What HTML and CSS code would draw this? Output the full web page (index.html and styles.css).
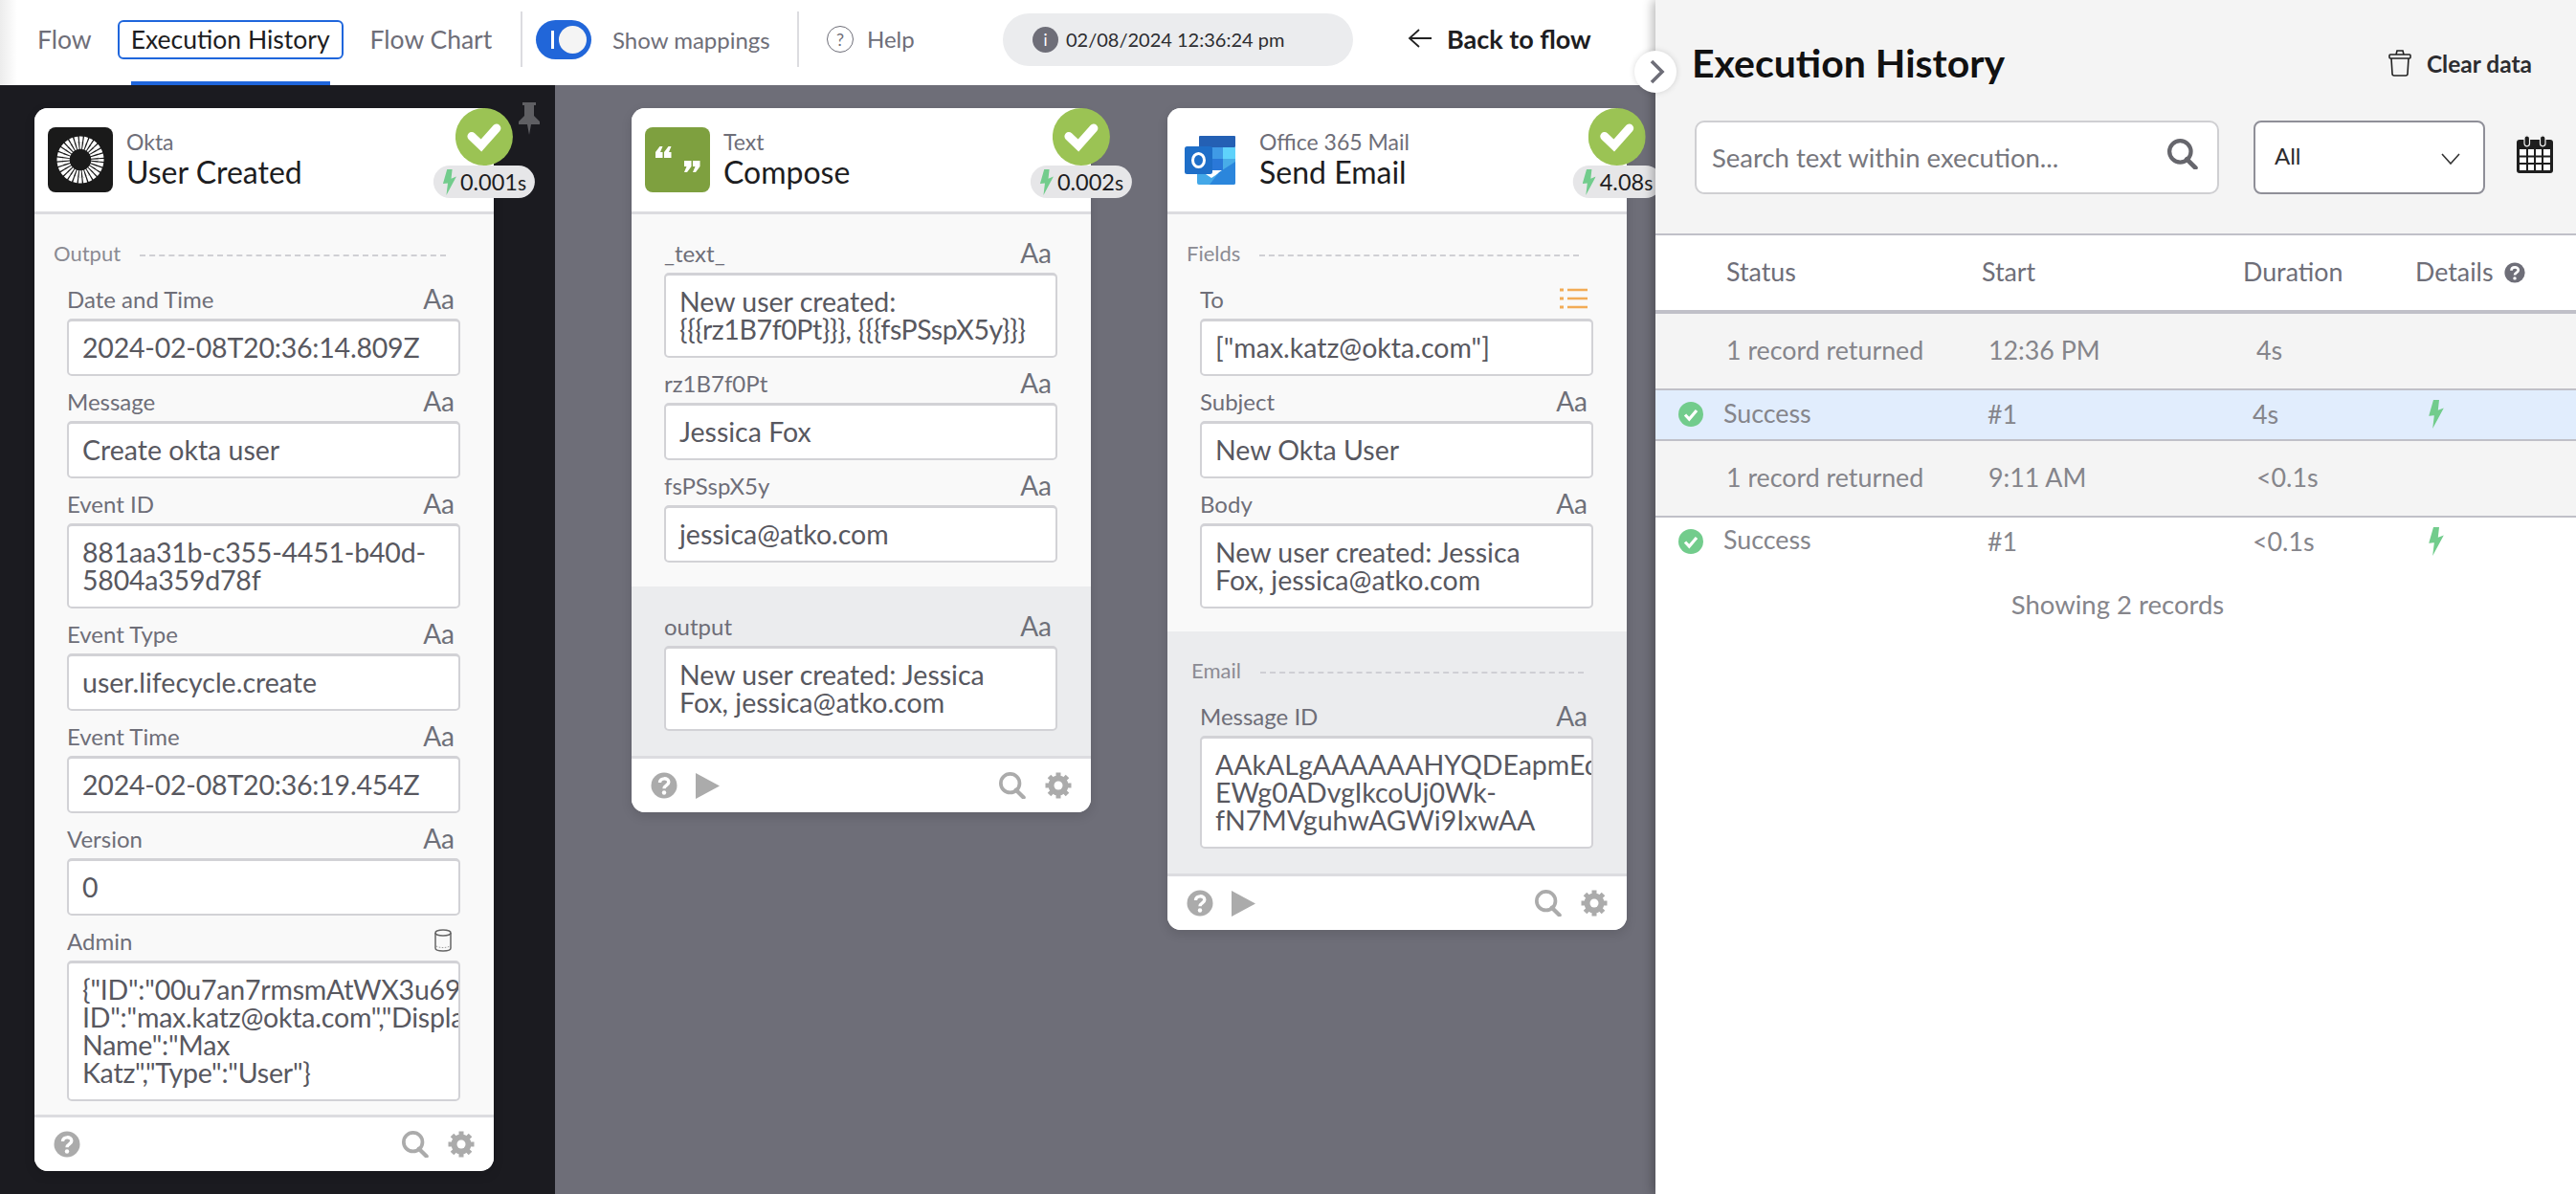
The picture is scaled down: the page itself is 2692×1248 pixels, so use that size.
FILE: index.html
```html
<!DOCTYPE html>
<html lang="en">
<head>
<meta charset="utf-8">
<title>Execution History</title>
<link rel="stylesheet" href="styles.css">
</head>
<body>
<svg class="defs" width="0" height="0" aria-hidden="true">
  <defs>
    <symbol id="bolt" viewBox="0 0 13 25"><path d="M4 0 H9 L8 9 L13 7 L3.300 25 L4.700 13.500 L0 14 Z" fill="#72cc8c"/></symbol>
    <symbol id="check" viewBox="0 0 60 60"><circle cx="30" cy="30" r="30" fill="#9bc354"/><path d="M17 29.500 L27 39 L43 21" fill="none" stroke="#fff" stroke-width="9" stroke-linecap="round"/></symbol>
    <symbol id="search" viewBox="0 0 30 30"><circle cx="12.500" cy="12.500" r="10.500" fill="none" stroke="currentColor" stroke-width="4"/><path d="M19 20 L27.500 28.500" fill="none" stroke="currentColor" stroke-width="4.500" stroke-linecap="round"/></symbol>
    <symbol id="qmark" viewBox="0 0 28 28"><circle cx="14" cy="14" r="13.500" fill="currentColor"/><path d="M9.500 11 C9.500 5.500 18.800 5.500 18.800 10.600 C18.800 14 14 13.800 14 17.300" fill="none" stroke="#fff" stroke-width="3.400"/><circle cx="14" cy="21.500" r="2.200" fill="#fff"/></symbol>
    <symbol id="gear" viewBox="0 0 28 28"><circle cx="14" cy="14" r="7.500" fill="none" stroke="currentColor" stroke-width="6"/><path d="M14 0.500 V27.500 M0.500 14 H27.500 M4.500 4.500 L23.500 23.500 M23.500 4.500 L4.500 23.500" stroke="currentColor" stroke-width="5"/><circle cx="14" cy="14" r="4.500" fill="#fff"/></symbol>
    <symbol id="okcheck" viewBox="0 0 26 26"><circle cx="13" cy="13" r="13" fill="#72cc8c"/><path d="M7 13.500 L11.300 18 L19 9" fill="none" stroke="#fff" stroke-width="3.200"/></symbol>
  </defs>
</svg>
<div class="app">
  <main class="main">
    <header class="topbar">
      <nav class="tabs">
        <a class="tab">Flow</a>
        <a class="tab tab-active"><span class="tab-focus">Execution History</span></a>
        <a class="tab">Flow Chart</a>
      </nav>
      <div class="mapping">
        <span class="toggle"><i class="toggle-bar"></i><i class="toggle-knob"></i></span>
        <span class="mapping-label">Show mappings</span>
      </div>
      <div class="help">
        <span class="help-circle">?</span>
        <span>Help</span>
      </div>
      <div class="date-pill"><span class="info">i</span><span>02/08/2024 12:36:24 pm</span></div>
      <a class="back"><svg class="back-arrow" viewBox="0 0 26 24"><path d="M12 3 L2 12 L12 21 M2 12 H25" fill="none" stroke="#222" stroke-width="1.800"/></svg>Back to flow</a>
    </header>

    <div class="canvas">
      <section class="source">
        <svg class="pin" viewBox="0 0 24 34"><path d="M5 0 H19 V3 H17 V14 L23 20 V23 H14 L12 34 L10 23 H1 V20 L7 14 V3 H5 Z" fill="#5f5f63"/></svg>
        <article class="card">
          <div class="status"><svg class="check"><use href="#check"/></svg><span class="timing"><svg class="bolt"><use href="#bolt"/></svg>0.001<small>s</small></span></div>
          <header class="card-head">
            <span class="logo logo-okta">
              <svg viewBox="0 0 68 68" width="68" height="68">
                <circle cx="34" cy="34" r="15" fill="none" stroke="#fff" stroke-width="7.500" stroke-dasharray="2.200 1.166" stroke-dashoffset="1.100"/>
                <circle cx="34" cy="34" r="21.500" fill="none" stroke="#fff" stroke-width="6" stroke-dasharray="3.600 1.225" stroke-dashoffset="1.800"/>
              </svg>
            </span>
            <div class="titles"><span class="app-name">Okta</span><span class="card-title">User Created</span></div>
          </header>
          <div class="card-body">
            <div class="group-label"><span>Output</span><i class="dash"></i></div>
            <div class="field"><div class="field-head"><span>Date and Time</span><b class="aa">Aa</b></div><div class="value value-tight">2024-02-08T20:36:14.809Z</div></div>
            <div class="field"><div class="field-head"><span>Message</span><b class="aa">Aa</b></div><div class="value">Create okta user</div></div>
            <div class="field"><div class="field-head"><span>Event ID</span><b class="aa">Aa</b></div><div class="value value-tight">881aa31b-c355-4451-b40d-<br>5804a359d78f</div></div>
            <div class="field"><div class="field-head"><span>Event Type</span><b class="aa">Aa</b></div><div class="value">user.lifecycle.create</div></div>
            <div class="field"><div class="field-head"><span>Event Time</span><b class="aa">Aa</b></div><div class="value value-tight">2024-02-08T20:36:19.454Z</div></div>
            <div class="field"><div class="field-head"><span>Version</span><b class="aa">Aa</b></div><div class="value">0</div></div>
            <div class="field"><div class="field-head"><span>Admin</span><svg class="cyl" viewBox="0 0 18 24"><ellipse cx="9" cy="4" rx="8" ry="3" fill="none" stroke="#666" stroke-width="1.500"/><path d="M1 4 V20 C1 24 17 24 17 20 V4" fill="none" stroke="#666" stroke-width="1.500"/><path d="M2 18 C5 20 13 20 16 18" fill="none" stroke="#999" stroke-dasharray="1.500 1.500"/></svg></div><div class="value value-tight">{"ID":"00u7an7rmsmAtWX3u697",<br>ID":"max.katz@okta.com","Display<br>Name":"Max<br>Katz","Type":"User"}</div></div>
          </div>
          <footer class="card-foot">
            <svg class="foot-icon"><use href="#qmark"/></svg>
            <span class="foot-gap"></span>
            <svg class="foot-icon foot-search"><use href="#search"/></svg>
            <svg class="foot-icon"><use href="#gear"/></svg>
          </footer>
        </article>
      </section>

      <section class="flow">
        <article class="card">
          <div class="status"><svg class="check"><use href="#check"/></svg><span class="timing"><svg class="bolt"><use href="#bolt"/></svg>0.002<small>s</small></span></div>
          <header class="card-head">
            <span class="logo logo-text">
              <svg viewBox="0 0 68 68" width="68" height="68"><path d="M11 32 V26 L15.500 20 H18.500 L16 26 H18.500 V32 Z M20 32 V26 L24.500 20 H27.500 L25 26 H27.500 V32 Z" fill="#fff"/><path d="M41 35 H48.500 V41 L44 47 H41 L43.500 41 H41 Z M50 35 H57.500 V41 L53 47 H50 L52.500 41 H50 Z" fill="#fff"/></svg>
            </span>
            <div class="titles"><span class="app-name">Text</span><span class="card-title">Compose</span></div>
          </header>
          <div class="card-body card-body-plain">
            <div class="field"><div class="field-head"><span>_text_</span><b class="aa">Aa</b></div><div class="value">New user created:<br><span class="mustache">{{{rz1B7f0Pt}}}, {{{fsPSspX5y}}}</span></div></div>
            <div class="field"><div class="field-head"><span>rz1B7f0Pt</span><b class="aa">Aa</b></div><div class="value">Jessica Fox</div></div>
            <div class="field"><div class="field-head"><span>fsPSspX5y</span><b class="aa">Aa</b></div><div class="value">jessica@atko.com</div></div>
          </div>
          <div class="card-output card-output-plain">
            <div class="field"><div class="field-head"><span>output</span><b class="aa">Aa</b></div><div class="value">New user created: Jessica<br>Fox, jessica@atko.com</div></div>
          </div>
          <footer class="card-foot">
            <svg class="foot-icon"><use href="#qmark"/></svg>
            <svg class="play" viewBox="0 0 25 27"><path d="M0 0 L25 13.500 L0 27 Z" fill="#ababab"/></svg>
            <span class="foot-gap"></span>
            <svg class="foot-icon foot-search"><use href="#search"/></svg>
            <svg class="foot-icon"><use href="#gear"/></svg>
          </footer>
        </article>

        <article class="card">
          <div class="status"><svg class="check"><use href="#check"/></svg><span class="timing"><svg class="bolt"><use href="#bolt"/></svg>4.08<small>s</small></span></div>
          <header class="card-head">
            <span class="logo logo-outlook">
              <svg viewBox="0 0 54 51" width="54" height="51">
                <rect x="15" y="0" width="38" height="12" rx="1" fill="#2460b4"/>
                <rect x="15" y="12" width="13" height="12" fill="#2a72d0"/><rect x="28" y="12" width="12" height="12" fill="#3f9ae6"/><rect x="40" y="12" width="13" height="12" fill="#5fd2fb"/>
                <rect x="15" y="24" width="13" height="12" fill="#1f5bb0"/><rect x="28" y="24" width="12" height="12" fill="#2a78d8"/><rect x="40" y="24" width="13" height="12" fill="#48ace8"/>
                <path d="M13 34 L28 44 L53 27 V49 Q53 51 51 51 H15 Q13 51 13 49 Z" fill="#44a8e8"/>
                <path d="M53 27 V49 Q53 51 51 51 H26 L36 38 Z" fill="#2b86dc"/>
                <rect x="0" y="11" width="29" height="29" rx="2.500" fill="#1e6ec8"/>
                <ellipse cx="14.500" cy="25.500" rx="6" ry="7" fill="none" stroke="#fff" stroke-width="3"/>
              </svg>
            </span>
            <div class="titles"><span class="app-name">Office 365 Mail</span><span class="card-title">Send Email</span></div>
          </header>
          <div class="card-body card-body-fields">
            <div class="group-label"><span>Fields</span><i class="dash"></i></div>
            <div class="field"><div class="field-head"><span>To</span><svg class="list" viewBox="0 0 29 22"><path d="M8 2 H29 M8 11 H29 M8 20 H29" stroke="#f2ac56" stroke-width="2.600"/><path d="M0 2 H4 M0 11 H4 M0 20 H4" stroke="#f2ac56" stroke-width="3"/></svg></div><div class="value">["max.katz@okta.com"]</div></div>
            <div class="field"><div class="field-head"><span>Subject</span><b class="aa">Aa</b></div><div class="value">New Okta User</div></div>
            <div class="field"><div class="field-head"><span>Body</span><b class="aa">Aa</b></div><div class="value">New user created: Jessica<br>Fox, jessica@atko.com</div></div>
          </div>
          <div class="card-output">
            <div class="group-label group-label-inset"><span>Email</span><i class="dash"></i></div>
            <div class="field"><div class="field-head"><span>Message ID</span><b class="aa">Aa</b></div><div class="value">AAkALgAAAAAAHYQDEapmEdm<br>EWg0ADvgIkcoUj0Wk-<br>fN7MVguhwAGWi9IxwAA</div></div>
          </div>
          <footer class="card-foot">
            <svg class="foot-icon"><use href="#qmark"/></svg>
            <svg class="play" viewBox="0 0 25 27"><path d="M0 0 L25 13.500 L0 27 Z" fill="#ababab"/></svg>
            <span class="foot-gap"></span>
            <svg class="foot-icon foot-search"><use href="#search"/></svg>
            <svg class="foot-icon"><use href="#gear"/></svg>
          </footer>
        </article>
      </section>
    </div>
  </main>

  <aside class="panel">
    <button class="collapse"><svg viewBox="0 0 16 26" width="16" height="26"><path d="M2 2 L13 13 L2 24" fill="none" stroke="#6e6e78" stroke-width="3.600"/></svg></button>
    <div class="panel-top">
      <div class="panel-title-row">
        <h1 class="panel-title">Execution History</h1>
        <a class="clear"><svg class="trash" viewBox="0 0 24 28"><path d="M8 5 L9 1 H15 L16 5 M2 5 H22 Q23 5 23 6 V8 Q23 9 22 9 H2 Q1 9 1 8 V6 Q1 5 2 5 Z M3 9 L4 25 Q4 27 6 27 H18 Q20 27 20 25 L21 9" fill="none" stroke="#222" stroke-width="1.600"/></svg>Clear data</a>
      </div>
      <div class="filters">
        <div class="search-box"><span>Search text within execution...</span><svg class="search-icon"><use href="#search"/></svg></div>
        <div class="select"><span>All</span><svg class="select-chevron" viewBox="0 0 20 12"><path d="M1 1 L10 11 L19 1" fill="none" stroke="#333" stroke-width="1.600"/></svg></div>
        <svg class="calendar" viewBox="0 0 38 40"><path d="M3 5 H35 Q38 5 38 8 V37 Q38 40 35 40 H3 Q0 40 0 37 V8 Q0 5 3 5 Z" fill="#1e1e1e"/><rect x="8" y="0.800" width="5.500" height="11" rx="2.700" fill="#1e1e1e" stroke="#f4f4f4" stroke-width="1.200"/><rect x="24.500" y="0.800" width="5.500" height="11" rx="2.700" fill="#1e1e1e" stroke="#f4f4f4" stroke-width="1.200"/><path d="M3 15 H35 V37 H3 Z" fill="#fff"/><path d="M11 15 V37 M19 15 V37 M27 15 V37 M3 22.500 H35 M3 30 H35" stroke="#1e1e1e" stroke-width="2"/></svg>
      </div>
    </div>
    <div class="table">
      <div class="row row-head">
        <span class="c1">Status</span><span class="c2">Start</span><span class="c3">Duration</span>
        <span class="c4">Details <svg class="details-help"><use href="#qmark"/></svg></span>
      </div>
      <div class="row row-group">
        <span class="c1">1 record returned</span><span class="c2">12:36 PM</span><span class="c3">4s</span><span></span>
      </div>
      <div class="row row-item row-selected">
        <span class="c1 status-cell"><svg class="ok"><use href="#okcheck"/></svg><span class="status-text">Success</span></span><span class="c2">#1</span><span class="c3">4s</span><span class="c4"><svg class="row-bolt"><use href="#bolt"/></svg></span>
      </div>
      <div class="row row-group">
        <span class="c1">1 record returned</span><span class="c2">9:11 AM</span><span class="c3">&lt;0.1s</span><span></span>
      </div>
      <div class="row row-item">
        <span class="c1 status-cell"><svg class="ok"><use href="#okcheck"/></svg><span class="status-text">Success</span></span><span class="c2">#1</span><span class="c3">&lt;0.1s</span><span class="c4"><svg class="row-bolt"><use href="#bolt"/></svg></span>
      </div>
    </div>
    <p class="records">Showing 2 records</p>
  </aside>
</div>
</body>
</html>
```

FILE: styles.css
```css
* { box-sizing: border-box; }
html, body { margin: 0; height: 100%; }
body { font-family: "Lato", "Liberation Sans", sans-serif; color: #333; overflow: hidden; background: #fff; }
.defs { position: absolute; }

.app { display: flex; height: 1248px; width: 2692px; overflow: hidden; }
.main { width: 1730px; flex: none; display: flex; flex-direction: column; }

/* top bar */
.topbar { height: 89px; flex: none; display: flex; align-items: center; background: linear-gradient(90deg, #ececec 0, #fff 18px); position: relative; }
.tabs { display: flex; align-items: stretch; height: 89px; padding-left: 39px; width: 546px; flex: none; position: relative; }
.tabs::after { content: ""; position: absolute; right: 0; top: 12px; height: 58px; width: 2px; background: #dcdce0; }
.tab { font-size: 26.500px; color: #6e6e78; display: flex; align-items: flex-start; padding-top: 21px; line-height: 41px; white-space: nowrap; }
.tab:first-child { margin-right: 41px; }
.tab-active { border-bottom: 4px solid #1f66dc; margin-right: 42px; color: #1d1d21; height: 89px; }
.tab-focus { display: block; margin: 0 -14px; padding: 0 12px; border: 2px solid #1f66dc; border-radius: 6px; line-height: 37px; height: 41px; }
.mapping { display: flex; align-items: center; width: 289px; flex: none; padding-left: 14px; height: 58px; position: relative; margin-top: -7px; }
.mapping::after { content: ""; position: absolute; right: 0; top: 0; height: 58px; width: 2px; background: #dcdce0; }
.toggle { width: 58px; height: 41px; border-radius: 21px; background: #2166d9; position: relative; flex: none; }
.toggle-bar { position: absolute; left: 16px; top: 11px; width: 3px; height: 19px; background: #fff; }
.toggle-knob { position: absolute; right: 5px; top: 6px; width: 29px; height: 29px; border-radius: 50%; background: #f4f4f4; }
.mapping-label { font-size: 24px; color: #6e6e78; margin-left: 22px; white-space: nowrap; }
.help { display: flex; align-items: center; gap: 14px; font-size: 24px; color: #6e6e78; margin-left: 29px; width: 184px; flex: none; margin-top: -8px; }
.help-circle { width: 28px; height: 28px; border: 1.500px solid #6e6e78; border-radius: 50%; display: flex; align-items: center; justify-content: center; font-size: 18px; }
.date-pill { width: 366px; height: 55px; border-radius: 28px; background: #ebecee; display: flex; align-items: center; gap: 8px; padding-left: 31px; font-size: 20px; color: #2c2c30; margin-top: -7px; flex: none; }
.info { width: 27px; height: 27px; border-radius: 50%; background: #6e6e78; color: #fff; display: flex; align-items: center; justify-content: center; font-size: 17px; }
.back { display: flex; align-items: center; gap: 15px; font-size: 27px; font-weight: 700; color: #1d1d21; margin-left: 57px; margin-top: -9px; white-space: nowrap; }
.back-arrow { width: 26px; height: 24px; flex: none; }

/* canvas */
.canvas { flex: 1; display: flex; background: #6e6e78; min-height: 0; }
.source { width: 580px; flex: none; background: #1b1b20; padding: 24px 0 0 36px; position: relative; }
.pin { position: absolute; left: 541px; top: 18px; width: 24px; height: 34px; }
.flow { flex: 1; display: flex; align-items: flex-start; gap: 80px; padding: 24px 0 0 80px; min-width: 0; }

/* cards */
.card { width: 480px; background: #f9f9f9; border-radius: 14px; position: relative; box-shadow: 0 4px 12px rgba(0,0,0,.12); flex: none; }
.card-head { height: 111px; padding: 20px 14px; display: flex; gap: 14px; background: #fff; border-bottom: 3px solid #dcdce0; border-radius: 14px 14px 0 0; }
.logo { width: 68px; height: 68px; border-radius: 8px; flex: none; display: block; }
.logo-okta { background: #1a1a1a; }
.logo-text { background: #7ea03f; }
.logo-outlook { display: flex; align-items: center; padding-left: 4px; }
.titles { display: flex; flex-direction: column; }
.app-name { font-size: 23px; color: #6e6e78; line-height: 30px; }
.card-title { font-size: 32px; color: #1d1d21; line-height: 34px; }
.status { position: absolute; left: 470px; top: 0; transform: translateX(-50%); display: flex; flex-direction: column; align-items: center; z-index: 2; }
.check { width: 60px; height: 60px; display: block; }
.timing { height: 34px; padding: 0 9px 0 10px; border-radius: 17px; background: #e6e6e8; display: flex; align-items: center; font-size: 23.500px; color: #1d1d21; white-space: nowrap; }
.timing small { font-size: 21px; }
.bolt { width: 14px; height: 27px; margin-right: 4px; flex: none; }

.card-body { padding: 26px 20px 7px; }
.card-body-plain { padding: 21px 20px 18px; }
.card-body-fields { padding-bottom: 17px; }
.group-label { display: flex; align-items: center; gap: 20px; font-size: 22px; color: #8b8b93; height: 32px; margin: 0 30px 11px 0; }
.group-label > span { margin-top: -4px; }
.group-label-inset { margin: 0 25px 11px 5px; }
.dash { flex: 1; border-top: 2px dashed #cfcfd4; margin-top: 2px; }
.field { margin: 0 0 7px 14px; width: 411px; }
.field-head { height: 40px; display: flex; align-items: center; justify-content: space-between; font-size: 24px; color: #6e6e78; padding: 0 6px 2px 0; }
.aa { font-size: 28px; font-weight: 400; color: #6e7079; }
.value { font-size: 28.500px; line-height: 29px; padding: 13px 0 13px 14px; color: #58585f; background: #fff; border: 2px solid #d2d2d6; border-top-width: 3px; border-radius: 5px; overflow: hidden; white-space: nowrap; }
.value-tight { letter-spacing: -.2px; }
.mustache { letter-spacing: -.4px; }
.cyl { width: 18px; height: 24px; margin-right: 3px; }
.list { width: 29px; height: 22px; }

.card-output { background: #ebecee; padding: 26px 20px 19px; }
.card-output-plain { padding-top: 22px; }
.card-foot { height: 59px; background: #fff; border-top: 3px solid #dcdce0; border-radius: 0 0 14px 14px; display: flex; align-items: center; padding: 0 20px; color: #ababab; }
.foot-icon { width: 28px; height: 28px; flex: none; }
.foot-search { margin-right: 20px; }
.foot-gap { flex: 1; }
.play { width: 25px; height: 27px; margin-left: 19px; }

/* panel */
.panel { flex: 1; position: relative; background: #fff; box-shadow: -3px 0 10px rgba(0,0,0,.28); z-index: 3; min-width: 0; }
.collapse { position: absolute; left: -22px; top: 53px; width: 44px; height: 44px; border-radius: 50%; border: 0; background: #fff; padding: 0 0 0 3px; display: flex; align-items: center; justify-content: center; box-shadow: 0 0 6px rgba(0,0,0,.15); }
.panel-top { height: 244px; background: #f4f4f4; padding: 0 24px 0 38px; }
.panel-title-row { display: flex; align-items: center; justify-content: space-between; height: 126px; padding: 4px 22px 0 0; }
.panel-title { font-size: 41px; font-weight: 700; color: #111; margin: 0; }
.clear { display: flex; align-items: center; gap: 16px; font-size: 24.500px; font-weight: 700; color: #2c2c30; padding-top: 2px; }
.trash { width: 24px; height: 28px; }
.filters { display: flex; align-items: center; margin-left: 3px; }
.search-box { width: 548px; height: 77px; background: #fff; border: 2px solid #cfcfd2; border-radius: 10px; display: flex; align-items: center; justify-content: space-between; padding: 0 20px 0 16px; font-size: 27.500px; color: #77777d; }
.search-icon { width: 32px; height: 32px; color: #66666c; margin-top: -8px; }
.select { width: 242px; height: 77px; margin-left: 36px; border: 2px solid #8f8f98; border-radius: 8px; background: #fff; display: flex; align-items: center; justify-content: space-between; padding: 0 24px 4px 20px; font-size: 24px; color: #2c2c30; }
.select-chevron { width: 20px; height: 12px; margin-top: 6px; }
.calendar { width: 38px; height: 40px; margin-left: 33px; margin-top: -8px; flex: none; }

.table { font-size: 26.800px; }
.row { display: grid; grid-template-columns: 341px 273px 181px 1fr; align-items: center; }
.row > span { display: block; white-space: nowrap; }
.row-head { height: 84px; background: #fff; border-top: 2px solid #c0c0c8; border-bottom: 4px solid #c0c0c8; color: #6e6e78; padding-bottom: 2px; }
.row-group { height: 80px; background: #f4f4f4; border-bottom: 2px solid #c0c0c8; color: #85858b; padding-bottom: 2px; }
.row-item { height: 50px; background: #fff; color: #85858b; padding-bottom: 1px; }
.row-selected { height: 53px; background: #e1edfd; border-bottom: 2px solid #c0c0c8; }
.row-head .c1, .row-group .c1 { padding-left: 74px; }
.row-head .c4 { margin-left: -1px; }
.row-group .c2 { padding-left: 7px; }
.row-group .c3 { padding-left: 14px; }
.row-item .c2 { padding-left: 6px; }
.row-item .c3 { padding-left: 10px; }
.row-item .c4 { padding-left: 13px; display: flex; }
.status-cell { display: flex !important; align-items: center; padding-left: 24px; gap: 21px; }
.status-text { margin-top: -3px; }
.ok { width: 26px; height: 26px; flex: none; }
.row-bolt { width: 16px; height: 30px; display: block; }
.details-help { width: 22px; height: 22px; color: #6e6e78; vertical-align: -2px; margin-left: 5px; }
.records { margin: 24px 0 0; padding-left: 4px; text-align: center; font-size: 27.500px; color: #85858b; }
```
